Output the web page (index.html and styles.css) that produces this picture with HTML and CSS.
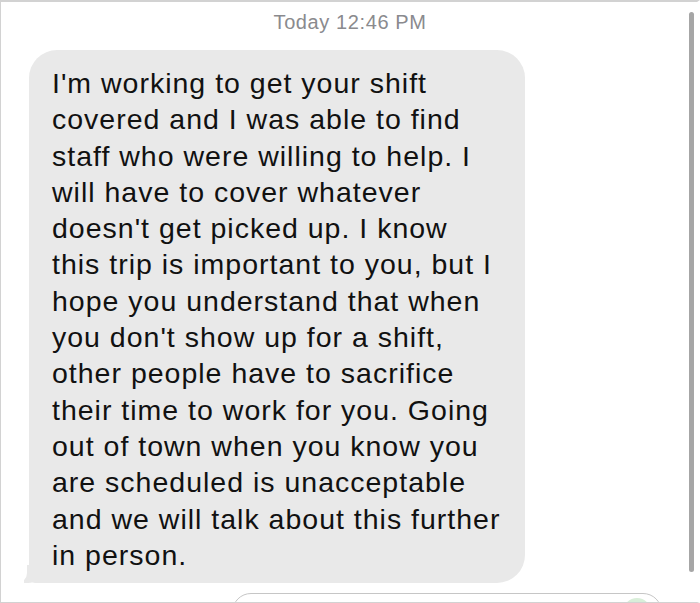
FILE: index.html
```html
<html>
    <head>
        <link rel="stylesheet" href="styles.css">
    </head>
    <body>
        <div class="screen">
            <div class="timestamp">Today 12:46 PM</div>
            <div class="thread">
                <div class="bubble received">
                    I'm working to get your shift<br>
                    covered and I was able to find<br>
                    staff who were willing to help. I<br>
                    will have to cover whatever<br>
                    doesn't get picked up. I know<br>
                    this trip is important to you, but I<br>
                    hope you understand that when<br>
                    you don't show up for a shift,<br>
                    other people have to sacrifice<br>
                    their time to work for you. Going<br>
                    out of town when you know you<br>
                    are scheduled is unacceptable<br>
                    and we will talk about this further<br>
                    in person.
                </div>
            </div>
            <div class="compose">
                <div class="compose-field">
                    <span class="send-btn"></span>
                </div>
            </div>
            <div class="scrollbar"></div>
        </div>
    </body>
</html>
```

FILE: styles.css
```css
body {
    margin: 0;
    background: #fff;
    font-family: "Liberation Sans", Arial, sans-serif;
}
.screen {
    width: 700px;
    height: 603px;
    box-sizing: border-box;
    border-top: 2px solid #d2d2d2;
    border-left: 1px solid #d2d2d2;
    border-right: 3px solid #fff;
    border-bottom: 1px solid #d2d2d2;
    position: relative;
    overflow: hidden;
}
.timestamp {
    text-align: center;
    font-size: 20px;
    letter-spacing: 0.6px;
    color: #8a8a8e;
    margin-top: 8px;
    padding-left: 2px;
    line-height: 24px;
}
.thread {
    padding-left: 28px;
    margin-top: 16px;
}
.bubble {
    position: relative;
    width: 496px;
    box-sizing: border-box;
    padding: 15px 8px 10px 23px;
    background: #e9e9e9;
    border-radius: 28px;
    border-bottom-left-radius: 6px;
    font-size: 28.5px;
    letter-spacing: 1px;
    line-height: 36.3px;
    color: #111;
    white-space: nowrap;
}
.bubble.received:before {
    content: "";
    position: absolute;
    bottom: 0;
    left: -5px;
    width: 18px;
    height: 18px;
    background: #e9e9e9;
    border-bottom-right-radius: 14px;
}
.bubble.received:after {
    content: "";
    position: absolute;
    bottom: 0;
    left: -12px;
    width: 10px;
    height: 18px;
    background: #fff;
    border-bottom-right-radius: 10px;
}
.compose {
    padding-left: 231px;
    margin-top: 10px;
}
.compose-field {
    position: relative;
    width: 428px;
    height: 36px;
    border: 1.5px solid #c6c6c6;
    border-radius: 20px;
}
.send-btn {
    position: absolute;
    top: 4px;
    right: 10px;
    width: 28px;
    height: 28px;
    border-radius: 50%;
    background: #d9eed9;
}
.scrollbar {
    position: absolute;
    top: 10px;
    left: 688px;
    width: 5px;
    height: 560px;
    border-radius: 3px;
    background: #a6a6a6;
}
```
